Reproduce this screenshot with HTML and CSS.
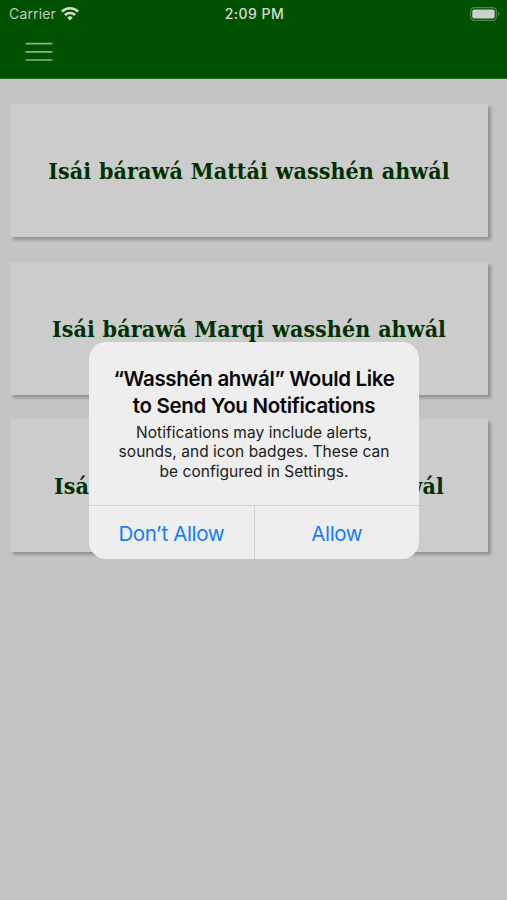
FILE: index.html
```
<!DOCTYPE html>
<html>
	<head>
		<meta charset="UTF-8">
		<title>Wasshén ahwál</title>
		<link rel="stylesheet" href="styles.css">
	</head>

	<body>
		<header>
			<div class="status">
				<div class="carrier">
					<span>Carrier</span>
					<svg class="wifi" width="18" height="14" viewBox="0 0 18 14">
						<g fill="none" stroke="#d3ddd3" stroke-width="2.5">
							<path d="M.9 4.7a11.5 11.5 0 0 1 16.2 0"/>
							<path d="M3.9 8a7.2 7.2 0 0 1 10.2 0"/>
						</g>
						<path fill="#d3ddd3" d="M9 13.4l-2.7-2.8a3.8 3.8 0 0 1 5.4 0z"/>
					</svg>
				</div>
				<span class="time">2:09 PM</span>
				<svg class="battery" width="30" height="14" viewBox="0 0 30 14">
					<rect x=".6" y=".6" width="25.8" height="12.8" rx="3.8" fill="none" stroke="#4f854f" stroke-width="1.2"/>
					<rect x="2.3" y="2.4" width="22.4" height="9.2" rx="2" fill="#cdcfcd"/>
					<path fill="#4f854f" d="M28 4.7q1.5.8 1.5 2.3T28 9.3z"/>
				</svg>
			</div>
			<button class="menu">
				<svg width="28" height="20" viewBox="0 0 28 20">
					<path d="M.5 1.7h27M.5 9.8h27M.5 18h27" stroke="#8cb18c" stroke-width="1.7"/>
				</svg>
			</button>
		</header>

		<main>
			<a class="card">Isái bárawá Mattái wasshén ahwál</a>
			<a class="card">Isái bárawá Marqi wasshén ahwál</a>
			<a class="card">Isái bárawá Lukái wasshén ahwál</a>
		</main>

		<div class="alert">
			<div class="message">
				<h1>“Wasshén ahwál” Would Like<br>to Send You Notifications</h1>
				<p>Notifications may include alerts,<br>sounds, and icon badges. These can<br>be configured in Settings.</p>
			</div>
			<div class="buttons">
				<button>Don’t Allow</button>
				<button>Allow</button>
			</div>
		</div>
	</body>
</html>
```
FILE: styles.css
```
body {
	margin: 0;
	height: 900px;
	overflow: hidden;
	background: #c4c4c4;
	font-family: Inter, "Liberation Sans", sans-serif;
}

header {
	box-sizing: border-box;
	height: 79px;
	background: #005200;
	border-bottom: 1px solid #2c692c;
}

.status {
	display: grid;
	grid-template-columns: 1fr auto 1fr;
	align-items: center;
	height: 27px;
	padding: 0 7px 0 9px;
	color: #d3ddd3;
	font-size: 14px;
}

.carrier {
	display: flex;
	align-items: center;
	gap: 5px;
	color: #bdcdbd;
	letter-spacing: .15px;
}

.time {
	font-weight: 500;
	letter-spacing: .5px;
}

.battery {
	justify-self: end;
}

.menu {
	display: block;
	margin: 15px 0 0 25px;
	padding: 0;
	border: 0;
	background: none;
}

.menu svg {
	display: block;
}

main {
	display: flex;
	flex-direction: column;
	gap: 24.5px;
	padding: 25px 19px 0 10px;
}

.card {
	display: flex;
	align-items: center;
	justify-content: center;
	height: 133px;
	background: #cccccc;
	box-shadow: 3px 3px 3px rgba(0, 0, 0, .25);
	color: #003000;
	font-family: "DejaVu Serif Condensed", "DejaVu Serif", serif;
	font-size: 23px;
	font-weight: bold;
	font-stretch: condensed;
	letter-spacing: .08px;
	word-spacing: .5px;
	white-space: nowrap;
}

.alert {
	position: absolute;
	top: 342px;
	left: 89px;
	width: 330px;
	height: 217px;
	display: flex;
	flex-direction: column;
	border-radius: 17px;
	overflow: hidden;
	background: #eeeeee;
}

.message {
	flex: 1;
	padding-top: 23px;
	text-align: center;
}

h1 {
	margin: 0;
	color: #080808;
	font-size: 20.5px;
	font-weight: 600;
	letter-spacing: -.32px;
	line-height: 27px;
}

p {
	margin: 3.5px 0 0;
	color: #202020;
	font-size: 15.5px;
	letter-spacing: .04px;
	line-height: 19.5px;
}

.buttons {
	display: flex;
	height: 53px;
	border-top: 1px solid #d3d3d3;
}

.buttons button {
	flex: 1;
	padding: 2px 0 0;
	border: 0;
	background: none;
	color: #147efb;
	font: 20.5px Inter, "Liberation Sans", sans-serif;
	letter-spacing: -.36px;
}

.buttons button + button {
	border-left: 1px solid #d3d3d3;
}
```
